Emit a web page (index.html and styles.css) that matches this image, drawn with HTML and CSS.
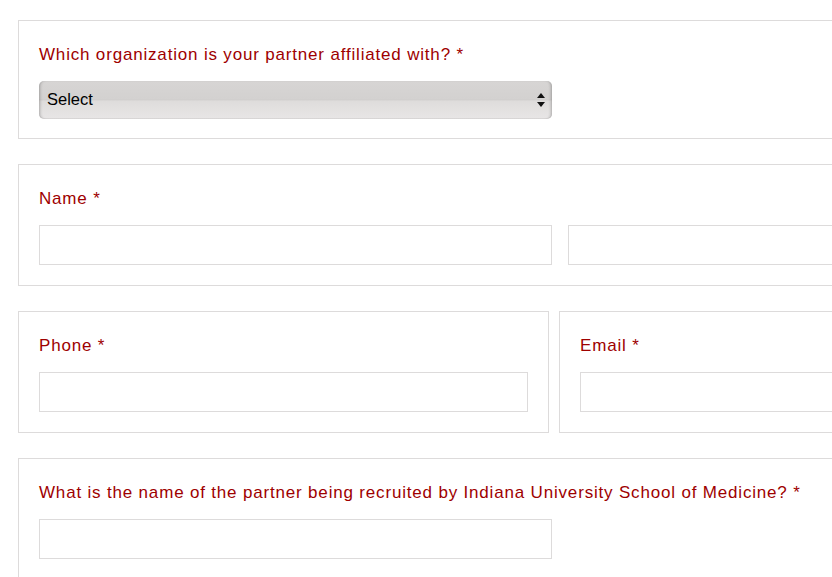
FILE: index.html
```html
<!DOCTYPE html>
<html>
<head>
<meta charset="utf-8">
<link rel="stylesheet" href="styles.css">
</head>
<body>
<form class="form">
  <div class="card card-select">
    <label class="label">Which organization is your partner affiliated with? *</label>
    <div class="select-wrap">
      <select class="select"><option>Select</option></select>
      <span class="arrows"><svg width="8" height="14" viewBox="0 0 8 14"><path d="M4 0 L8 5 L0 5 Z" fill="#111"/><path d="M0 9 L8 9 L4 14 Z" fill="#111"/></svg></span>
    </div>
  </div>

  <div class="card">
    <label class="label">Name *</label>
    <div class="name-row">
      <input class="input name-input" type="text">
      <input class="input name-input" type="text">
    </div>
  </div>

  <div class="split">
    <div class="card half">
      <label class="label">Phone *</label>
      <input class="input full" type="text">
    </div>
    <div class="card half">
      <label class="label">Email *</label>
      <input class="input full" type="text">
    </div>
  </div>

  <div class="card">
    <label class="label">What is the name of the partner being recruited by Indiana University School of Medicine? *</label>
    <input class="input wide" type="text">
  </div>
</form>
</body>
</html>
```

FILE: styles.css
```css
html, body {
  margin: 0;
  padding: 0;
  background: #fff;
  overflow: hidden;
}

.form {
  width: 1090px;
  padding: 20px 0 0 18px;
  font-family: "Liberation Sans", Arial, sans-serif;
}

.card {
  border: 1px solid #dddbdb;
  padding: 20px 20px 20px;
  margin-bottom: 25px;
  box-sizing: border-box;
}

.card-select {
  padding-bottom: 19px;
}

.label {
  display: block;
  color: #9e0000;
  font-size: 17px;
  line-height: 20px;
  letter-spacing: 0.82px;
  padding-top: 4px;
  margin-bottom: 16px;
}

.select-wrap {
  position: relative;
  width: 513px;
  height: 38px;
}

.select {
  -webkit-appearance: none;
  appearance: none;
  display: block;
  width: 513px;
  height: 38px;
  margin: 0;
  border: none;
  border-radius: 5px;
  padding: 0 0 3px 8px;
  font-family: "Liberation Sans", Arial, sans-serif;
  font-size: 16.5px;
  color: #000;
  background: linear-gradient(to bottom, #d7d5d4 0%, #d3d1d0 48%, #cdcbca 50%, #dedcdb 52%, #e8e6e6 100%);
  box-shadow: inset 3px 0 3px -2px rgba(0,0,0,0.25), inset -3px 0 3px -2px rgba(0,0,0,0.25), inset 0 -1px 0 rgba(0,0,0,0.05);
}

.arrows {
  position: absolute;
  right: 7px;
  top: 12px;
  line-height: 0;
}

.input {
  display: block;
  box-sizing: border-box;
  height: 40px;
  margin: 0;
  border: 1px solid #dddbdb;
  background: #fff;
}

.name-row {
  display: flex;
  gap: 16px;
}

.name-input {
  width: 513px;
}

.split {
  display: flex;
  gap: 10px;
}

.half {
  width: 531px;
  flex: none;
}

.full {
  width: 100%;
}

.wide {
  width: 513px;
}
```
